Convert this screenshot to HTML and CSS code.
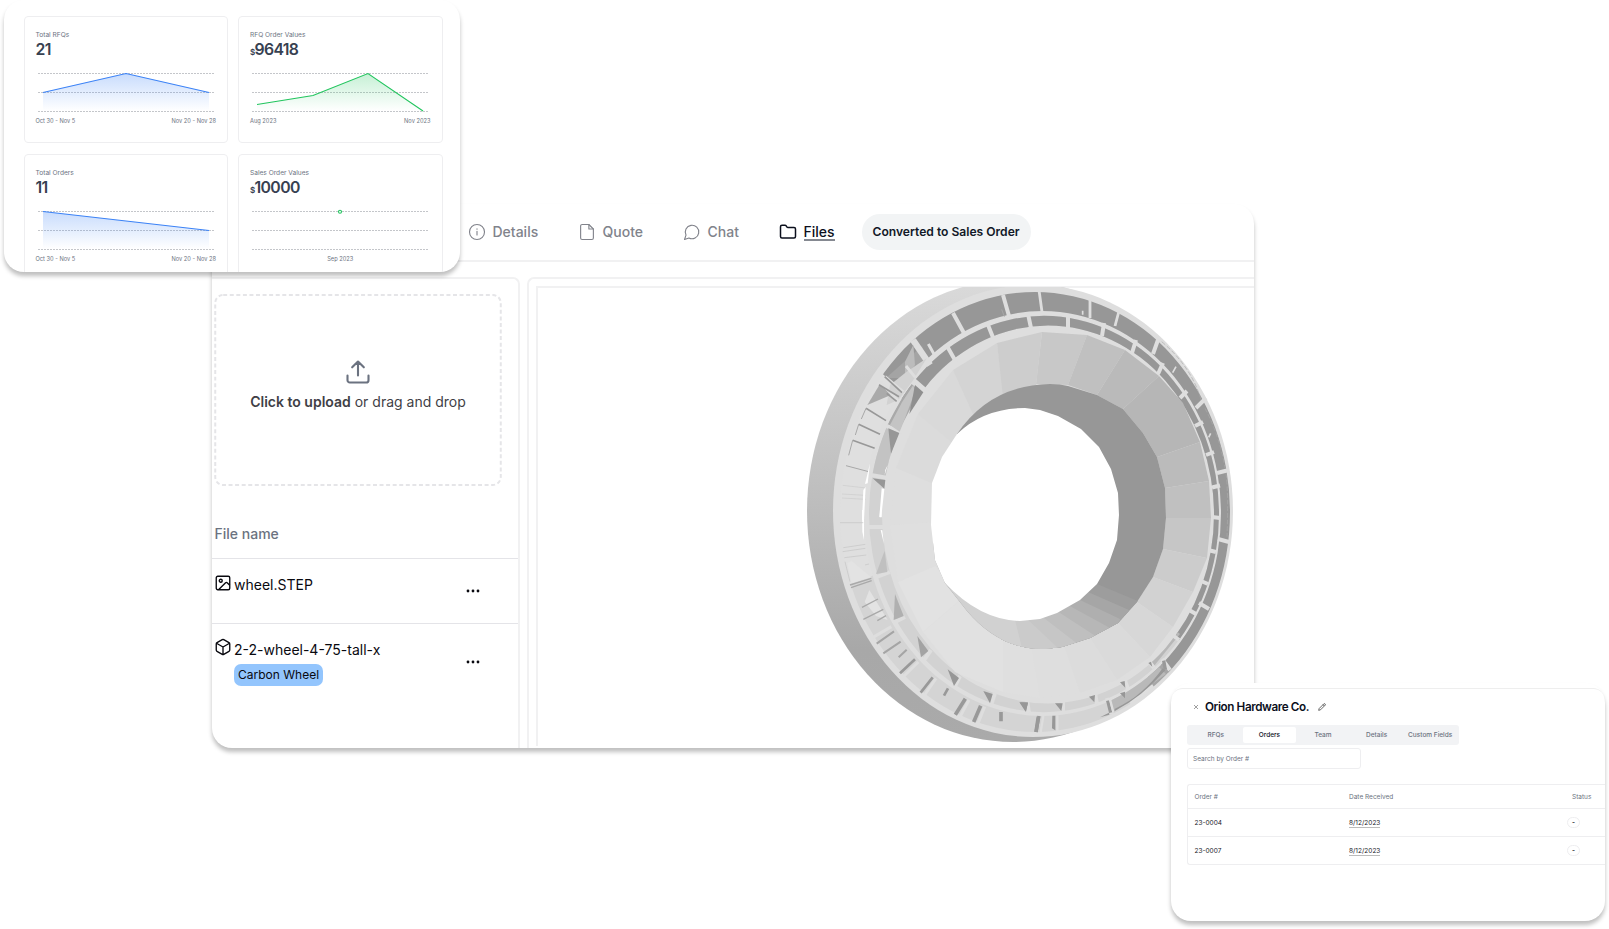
FILE: index.html
```html
<!DOCTYPE html>
<html lang="en">
<head>
<meta charset="utf-8">
<title>Orders workspace</title>
<link rel="stylesheet" href="styles.css">
</head>
<body>
<main class="canvas">

<section class="window files-window">
  <nav class="tabs">
    <a class="tab"><svg class="tab-icon" viewBox="0 0 24 24"><circle cx="12" cy="12" r="10"/><path d="M12 16v-5M12 7.6v.6"/></svg>Details</a>
    <a class="tab"><svg class="tab-icon" viewBox="0 0 24 24"><path d="M14.5 2H5.5a2 2 0 0 0-2 2v16a2 2 0 0 0 2 2h13a2 2 0 0 0 2-2V8z"/><path d="M14.5 2v6h6"/></svg>Quote</a>
    <a class="tab"><svg class="tab-icon" viewBox="0 0 24 24"><path d="M7.9 20A9 9 0 1 0 4 16.1L2 22Z"/></svg>Chat</a>
    <a class="tab tab-active"><svg class="tab-icon" viewBox="0 0 24 24"><path d="M20 20a2 2 0 0 0 2-2V8a2 2 0 0 0-2-2h-7.9a2 2 0 0 1-1.69-.9L9.6 3.9A2 2 0 0 0 7.93 3H4a2 2 0 0 0-2 2v13a2 2 0 0 0 2 2Z"/></svg><span class="tab-label">Files</span></a>
    <span class="status-pill">Converted to Sales Order</span>
  </nav>
  <div class="panels">
    <div class="file-panel">
      <div class="dropzone">
        <svg class="drop-outline" viewBox="0 0 289 193"><rect x="1" y="1" width="287" height="191" rx="8"/></svg>
        <svg class="upload-icon" viewBox="0 0 24 24"><path d="M21 15v4a2 2 0 0 1-2 2H5a2 2 0 0 1-2-2v-4M17 8l-5-5-5 5M12 3v12"/></svg>
        <p class="drop-text"><b>Click to upload</b> or drag and drop</p>
      </div>
      <div class="file-head">File name</div>
      <div class="file-row">
        <svg class="file-icon" viewBox="0 0 24 24"><rect x="3" y="3" width="18" height="18" rx="2"/><circle cx="9" cy="9" r="2"/><path d="m21 15-3.1-3.1a2 2 0 0 0-2.8 0L6 21"/></svg>
        <div class="file-info"><span class="file-name">wheel.STEP</span></div>
        <svg class="dots" viewBox="0 0 14 4"><circle cx="2" cy="2" r="1.4"/><circle cx="7" cy="2" r="1.4"/><circle cx="12" cy="2" r="1.4"/></svg>
      </div>
      <div class="file-row file-row-tall">
        <svg class="file-icon" viewBox="0 0 24 24"><path d="M21 8a2 2 0 0 0-1-1.73l-7-4a2 2 0 0 0-2 0l-7 4A2 2 0 0 0 3 8v8a2 2 0 0 0 1 1.73l7 4a2 2 0 0 0 2 0l7-4A2 2 0 0 0 21 16ZM3.3 7l8.7 5 8.7-5M12 22V12"/></svg>
        <div class="file-info"><span class="file-name">2-2-wheel-4-75-tall-x</span><span class="tag">Carbon Wheel</span></div>
        <svg class="dots" viewBox="0 0 14 4"><circle cx="2" cy="2" r="1.4"/><circle cx="7" cy="2" r="1.4"/><circle cx="12" cy="2" r="1.4"/></svg>
      </div>
    </div>
    <div class="viewer">
      <div class="viewport">
        <svg class="wheel" viewBox="538 287 716 461">
          <defs>
            <linearGradient id="body" x1="0" y1="0" x2="0" y2="1"><stop offset="0" stop-color="#dadada"/><stop offset=".5" stop-color="#bcbcbc"/><stop offset=".8" stop-color="#a8a8a8"/><stop offset="1" stop-color="#aaa"/></linearGradient>
            <clipPath id="outerRing"><path clip-rule="evenodd" d="M840 512a195 220 0 1 0 390 0a195 220 0 1 0-390 0M864 513.5a178.5 202.5 0 1 0 357 0a178.5 202.5 0 1 0-357 0"/></clipPath>
            <clipPath id="innerRing"><path clip-rule="evenodd" d="M869 514a175 198 0 1 0 350 0a175 198 0 1 0-350 0M882 514.5a166 189 0 1 0 332 0a166 189 0 1 0-332 0"/></clipPath>
          </defs>
          <ellipse cx="1013" cy="511" rx="206" ry="231" fill="url(#body)"/>
          <ellipse cx="1033" cy="511" rx="200" ry="226" fill="#dedede"/>
          <g clip-path="url(#outerRing)">
            <path fill="#dfdfdf" d="M830 280h410v460H830z"/>
            <path fill="#d4d4d4" d="M1040 513L835 590V745H1150z"/>
            <path fill="#979797" d="M1040 513L868 361V280H1240V720H1210L1160 664z"/>
            <path fill="#a6a6a6" d="M1040 513L1162 660l12 12-20 15z"/>
            <path fill="#b9b9b9" d="M1040 513L1152 660l14 14-52 38z"/>
            <path fill="#a4a4a4" d="M886 378l36-32 6 18-16 14z"/>
          </g>
          <g clip-path="url(#innerRing)">
            <path fill="#d2d2d2" d="M830 280h410v460H830z"/>
            <path fill="#979797" d="M1040 513L885 385V280H1240V640L1174 640z"/>
            <path fill="#a9a9a9" d="M1040 513L887 425l25-45z"/>
            <path fill="#c3c3c3" d="M1040 513L868 474l18-46z"/>
            <path fill="#b7b7b7" d="M1040 513L1180 634l-26 32z"/>
          </g>
          <g stroke="#dedede" stroke-width="4" fill="none">
            <path stroke-width="6.5" d="M913 340l17 25M912 380l15 13"/>
            <path d="M953 313l12 22M1003 295l6 21M1159 337l-6 17M1206 398l-10 10M1229 470l-12 3M1229 542l-11-3M1209 609l-10-6M1170 670l-8-11M1112 714l-5-16"/>
            <path stroke-width="2.8" d="M1039 290l3 22M1090 298v20M1119 311l-4 15"/>
            <path d="M947 346l9 16M988 325l6 15M1028 314l3 14M1068 314v14M1104 323l-2 13M1136 340l-4 13M1163 363l-5 11M1187 391l-7 7M1203 422l-8 4M1214 452l-8 3M1220 485.500l-8 2M1220 518l-8-1M1216 552l-8-2M1208 584l-7-3M1196 614l-7-4M1179 640l-8-6M1154 668l-6-8M1128 689l-4-11M1097 704l-2-11M1063 712v-11M1029 713l-2-13M991 705l4-12M954 688l6-12M924 660l7-10M893 623l12-6M874 578l16-6M868 527h17M871 475l17 3M887 426l15 6"/>
          </g>
          <!-- upper left pockets and ribs -->
          <g transform="translate(790 270) scale(.33333)">
            <path fill="#bcbcbc" d="M345 275l25-50 5 60-30 38z"/>
            <path fill="#d2d2d2" d="M300 345l50-40 60-40-40 65-45 60-35 15z"/>
            <path fill="#aaa" d="M268 345l40 28-76 32z"/><path fill="#c4c4c4" d="M300 465l36-68 34-52 5 20-34 90-12 30z"/>
            <path fill="#8f8f8f" d="M375 345l25 22-42 65z"/>
            <path fill="#979797" d="M295 475l33 14-25 62zM248 625l38 5-3 26z"/>
            <path stroke="#dedede" stroke-width="9" d="M415 222l18 32M348 288l28 34M285 320l55 46M270 335l55 58"/>
            <path stroke="#989898" stroke-width="5" fill="none" d="M284 320l52 48M267 344l60 36M290 370l30 24M228 415l60 37M206 463l64 30M188 511l66 24"/>
            <path stroke="#a8a8a8" stroke-width="3" fill="none" d="M168 587l68 18M228 415l-14 32M206 463l-10 32M188 511l-12 45M635 118l8 22"/>
            <path stroke="#ccc" stroke-width="2" fill="none" d="M158 646l70 8M156 672l70 4M156 684l70 4"/>
            <path fill="#fff" d="M240 580l-7 60-8 2zM227 650l-5 100h-6l4-90zM293 585l-9 30 2-16zM275 655l8 2-9 84h-6z"/>
          </g>
          <!-- lower left ribs -->
          <g transform="translate(790 510) scale(.33333)">
            <path fill="#fff" d="M216 0h6v90l-5-25zM270 0h5v22h-6zM272 60l5 1 5 42z"/>
            <path fill="#e3e3e3" d="M172 160l12-8 60 50-60 18zM238 240l55 90-35-12-34-42z"/>
            <path fill="#c0c0c0" d="M284 122l-26 70 34-6z"/>
            <path fill="#b0b0b0" d="M315 252l26 66-30 12z"/>
            <path fill="#a3a3a3" d="M382 378l33 45-22 19z"/>
            <path fill="#979797" d="M473 478l34 26-15 24zM580 543l28 9-8 28zM688 577l26 2-7 26z"/>
            <path stroke="#c4c4c4" stroke-width="2" fill="none" d="M150 38h70M160 113l66-10M158 125l68-10M163 143l66-8M225 165l12-3M165 155l15 60"/>
            <path stroke="#a9a9a9" stroke-width="4" fill="none" d="M180 225l64-20M183 233l62-21M216 292l48-25M220 328l60-30M262 332l26-15"/>
            <path stroke="#a5a5a5" stroke-width="6" fill="none" d="M260 401l52-37M280 430l52-35M326 442l24-23"/>
            <path stroke="#999" stroke-width="8" fill="none" d="M330 490l45-42M392 548l36-46M462 557l12-22"/>
            <path stroke="#999" stroke-width="11" fill="none" d="M496 614l30-48M551 636l21-49M633 634v-28M738 666l7-46"/>
            <path stroke="#dedede" stroke-width="9" fill="none" d="M244 385l60-35M340 500l45-44M404 555l34-50M510 620l27-50M564 640l20-50"/>
          </g>
          <!-- lower right ribs -->
          <g transform="translate(1020 510) scale(.33333)">
            <path fill="#979797" d="M0 577h24l-6 28zM105 580h23l-4 23zM207 560l18-5-2 22zM300 517l14-4 2 20zM385 459l8-4 4 15zM300 550l15-5v20zM97 617h9v44l-10-6z"/>
            <path stroke="#999" stroke-width="10" fill="none" d="M48 666l9-48M272 608l-9-36M436 478l-5-26"/>
            <path stroke="#dedede" stroke-width="7" fill="none" d="M62 666l8-48M112 664v-48M280 606l-10-38"/>
            <path fill="#979797" d="M284 603q80-40 152-122l-8-6Q370 556 284 597zM240 622l28-8-1-6z"/>
          </g>
          <g transform="translate(1020 270) scale(.33333)">
            <path stroke="#dedede" stroke-width="5" fill="none" d="M188 122v12M468 290l-10 18M572 490l-6 12"/>
            <path stroke="#ababab" stroke-width="2" stroke-dasharray="14 6" fill="none" d="M425 215q90 75 120 180M555 415q45 85 60 180M618 610q8 60 3 190"/>
          </g>
          <!-- cone facets -->
          <g>
            <path fill="#c8c8c8" d="M1042 332L1087 335 1068 385 1036 384z"/>
            <path fill="#c0c0c0" d="M1087 335L1125 350 1097 395 1068 385z"/>
            <path fill="#bababa" d="M1125 350L1159 376 1123 409 1097 395z"/>
            <path fill="#b6b6b6" d="M1159 376L1183 403 1200 442 1157 457 1143 433 1123 409z"/>
            <path fill="#bbb" d="M1200 442L1209 481 1165 488 1157 457z"/>
            <path fill="#c0c0c0" d="M1209 481L1211 518 1166 518 1165 488z"/>
            <path fill="#c6c6c6" d="M1211 518L1207 558 1163 549 1166 518z"/>
            <path fill="#ccc" d="M1207 558L1193 592 1153 577 1163 549z"/>
            <path fill="#d2d2d2" d="M1193 592L1173 627 1137 602 1153 577z"/>
            <path fill="#d7d7d7" d="M1173 627L1150 657 1118 623 1137 602z"/>
            <path fill="#dadada" d="M1150 657L1117 680 1090 638 1118 623z"/>
            <path fill="#dcdcdc" d="M1117 680L1080 693 1062 647 1090 638z"/>
            <path fill="#dedede" d="M1080 693L1040 698 1030 640 1062 640z"/>
            <path fill="#dfdfdf" d="M1040 698L1003 692 1003 635 1030 640z"/>
            <path fill="#e1e1e1" d="M1003 692L955 672 923 632 960 600 1003 635z"/>
            <path fill="#e2e2e2" d="M923 632L898 582 935 565 960 600z"/>
            <path fill="#dfdfdf" d="M898 582L890 525 932 522 938 565z"/>
            <path fill="#dedede" d="M890 525L896 468 936 480 936 522z"/>
            <path fill="#dbdbdb" d="M896 468L918 414 955 440 936 485z"/>
            <path fill="#d9d9d9" d="M918 414L953 370 978 410 955 445z"/>
            <path fill="#d4d4d4" d="M953 370L997 343 1004 396 973 414z"/>
            <path fill="#cdcdcd" d="M997 343L1042 332 1036 386 1003 397z"/>
          </g>
          <!-- bore and opening -->
          <clipPath id="boreClip"><path d="M1050 384Q1060 384 1068 386L1097 395 1123 409 1143 433 1157 457 1165 488 1166 518 1163 549 1153 577 1137 602 1118 623 1090 638 1062 647 1045 649Q1000 650 967 611L945 583 935 560 931 525 932 483 942 457 957 434Q990 385 1050 384z"/></clipPath>
          <g clip-path="url(#boreClip)">
            <path fill="#979797" d="M957 380h213v275H925V580l32-146z"/>
            <path fill="#9d9d9d" d="M1097 584L1145 604 1120 660H1000V560z"/>
            <path fill="#a6a6a6" d="M1088 592L1129 610 1120 660H1000V560z"/>
            <path fill="#afafaf" d="M1080 600L1120 619 1110 660H1000V560z"/>
            <path fill="#b7b7b7" d="M1068 605L1110 628 1100 660H1000V560z"/>
            <path fill="#bfbfbf" d="M1057 611L1097 637 1090 660H1000V560z"/>
            <path fill="#c6c6c6" d="M1040 615L1079 645 1070 660H1000V560z"/>
            <path fill="#cbcbcb" d="M1025 617L1060 650 1000 660V560z"/>
            <path fill="#d1d1d1" d="M925 560H1000L1025 660H925z"/>
            <path fill="#fff" d="M1025 408L1040 410 1058 416 1081 429 1099 447 1111 469 1118 493 1119 515 1117 540 1109 563 1097 584 1080 600 1057 613 1040 619 1020 621Q980 620 945 583L925 560V434H957Q984 408 1025 408z"/>
          </g>
        </svg>
      </div>
    </div>
  </div>
</section>

<section class="window stats-window">
  <article class="card">
    <h3 class="card-label">Total RFQs</h3><p class="card-value">21</p>
    <svg class="chart" viewBox="0 0 180 40"><defs><linearGradient id="blue" x1="0" y1="0" x2="0" y2="1"><stop offset="0" stop-color="#3b82f6" stop-opacity=".28"/><stop offset="1" stop-color="#3b82f6" stop-opacity="0"/></linearGradient></defs><path class="grid" d="M2 1.500h176M2 20.500h176M2 39.500h176"/><path fill="url(#blue)" d="M7 20.500L90 1.500 173 20.500V39H7z"/><path class="line blue" d="M7 20.500L90 1.500 173 20.500"/></svg>
    <div class="axis"><span>Oct 30 - Nov 5</span><span>Nov 20 - Nov 28</span></div>
  </article>
  <article class="card card-right">
    <h3 class="card-label">RFQ Order Values</h3><p class="card-value"><small>$</small>96418</p>
    <svg class="chart" viewBox="0 0 180 40"><defs><linearGradient id="green" x1="0" y1="0" x2="0" y2="1"><stop offset="0" stop-color="#22c55e" stop-opacity=".26"/><stop offset="1" stop-color="#22c55e" stop-opacity="0"/></linearGradient></defs><path class="grid" d="M2 1.500h176M2 20.500h176M2 39.500h176"/><path fill="url(#green)" d="M7 32.500L63 23.500 118 1.500 173 39H7z"/><path class="line green" d="M7 32.500L63 23.500 118 1.500 173 39"/></svg>
    <div class="axis"><span>Aug 2023</span><span>Nov 2023</span></div>
  </article>
  <article class="card">
    <h3 class="card-label">Total Orders</h3><p class="card-value">11</p>
    <svg class="chart" viewBox="0 0 180 40"><path class="grid" d="M2 1.500h176M2 20.500h176M2 39.500h176"/><path fill="url(#blue)" d="M7 1.500L173 20.500V39H7z"/><path class="line blue" d="M7 1.500L173 20.500"/></svg>
    <div class="axis"><span>Oct 30 - Nov 5</span><span>Nov 20 - Nov 28</span></div>
  </article>
  <article class="card card-right">
    <h3 class="card-label">Sales Order Values</h3><p class="card-value"><small>$</small>10000</p>
    <svg class="chart" viewBox="0 0 180 40"><path class="grid" d="M2 1.500h176M2 20.500h176M2 39.500h176"/><circle class="line green point" cx="90" cy="1.800" r="1.500"/></svg>
    <div class="axis axis-center"><span>Sep 2023</span></div>
  </article>
</section>

<section class="window order-window">
  <div class="order-body">
    <header class="order-head">
      <svg class="close" viewBox="0 0 6 6"><path d="M1 1l4 4M5 1L1 5"/></svg>
      <h2 class="order-title">Orion Hardware Co.</h2>
      <svg class="pencil" viewBox="0 0 24 24"><path d="M17 3a2.850 2.830 0 1 1 4 4L7.500 20.500 2 22l1.500-5.500ZM15 5l4 4"/></svg>
    </header>
    <nav class="segments"><span>RFQs</span><span class="segment-on">Orders</span><span>Team</span><span>Details</span><span>Custom Fields</span></nav>
    <div class="search">Search by Order #</div>
    <div class="table">
      <div class="tr th"><span>Order #</span><span>Date Received</span><span class="status-head">Status</span></div>
      <div class="tr"><span>23-0004</span><span><u>8/12/2023</u></span><span class="badge">-</span></div>
      <div class="tr tr-last"><span>23-0007</span><span><u>8/12/2023</u></span><span class="badge">-</span></div>
    </div>
  </div>
</section>

</main>
</body>
</html>
```
FILE: styles.css
```css
* { box-sizing: border-box; }
body { margin: 0; background: #fff; font-family: Inter, "Liberation Sans", sans-serif; }
h2, h3, p { margin: 0; }
svg { display: block; flex: none; }
.canvas { position: relative; width: 1609px; height: 929px; overflow: hidden; }
.window { position: absolute; overflow: hidden; background: #fff; border-radius: 20px; box-shadow: 0 4px 4px rgba(0, 0, 0, .25); }

/* files window */
.files-window { left: 212px; top: 204px; width: 1042px; height: 544px; }
.tabs { display: grid; grid-template-columns: 110px 105px 96px 83px auto; justify-content: start; align-items: center; height: 58px; padding: 0 0 1px 255.500px; border-bottom: 2px solid #f1f1f2; }
.tab { display: flex; align-items: center; gap: 7px; color: #81838b; font-size: 14px; font-weight: 500; }
.tab-icon { width: 18px; height: 18px; fill: none; stroke: currentColor; stroke-width: 1.500; stroke-linecap: round; stroke-linejoin: round; }
.tab-active { color: #0b0f1c; }
.tab-active .tab-icon { stroke-width: 2; }
.tab-label { line-height: 15px; border-bottom: 2px solid #858991; margin-top: 2px; }
.status-pill { display: flex; align-items: center; height: 36px; padding: 0 11px; border-radius: 18px; background: #f2f4f5; color: #111827; font-size: 12.100px; font-weight: 600; }
.panels { display: flex; gap: 7px; height: 486px; padding-top: 15px; }
.file-panel { width: 308px; flex: none; border: 2px solid #f1f1f2; border-left: 0; border-bottom: 0; border-radius: 0 7px 0 0; }
.dropzone { position: relative; display: flex; flex-direction: column; align-items: center; width: 288px; height: 193px; margin: 15px 0 0 2px; padding-top: 64px; }
.drop-outline { position: absolute; inset: 0; width: 288px; height: 192px; fill: none; stroke: #e5e5e8; stroke-width: 2; stroke-dasharray: 4 2.600; }
.upload-icon { width: 28px; height: 28px; fill: none; stroke: #6b7280; stroke-width: 1.800; stroke-linecap: round; stroke-linejoin: round; }
.drop-text { margin-top: 7px; color: #3f3f46; font-size: 14px; line-height: 18px; }
.drop-text b { font-weight: 600; }
.file-head { display: flex; align-items: center; height: 72px; padding: 22px 0 0 2.500px; border-bottom: 1px solid #e4e4e8; color: #6b7280; font-size: 14px; font-weight: 500; }
.file-row { position: relative; display: flex; height: 65px; padding: 15px 0 0 1.500px; border-bottom: 1px solid #e4e4e8; color: #09090f; }
.file-row-tall { height: auto; border: 0; padding-top: 14.500px; }
.file-icon { width: 18px; height: 18px; fill: none; stroke: #09090f; stroke-width: 1.800; stroke-linejoin: round; margin-top: -.5px; }
.file-info { display: flex; flex-direction: column; align-items: flex-start; width: 234px; padding-left: 2.500px; }
.file-name { font-size: 14px; line-height: 22px; }
.tag { height: 22px; margin-top: 3px; padding: 0 4px; border-radius: 7px; background: #93c5fd; font-size: 12px; line-height: 22px; }
.dots { width: 14px; height: 4px; margin-top: 15px; fill: #09090f; }
.file-row-tall .dots { margin-top: 21px; }
.viewer { flex: 1; padding: 7px 0 0 7px; border: 2px solid #f1f1f2; border-width: 2px 0 0 2px; border-radius: 7px 0 0 0; }
.viewport { height: 460px; border: 2px solid #f1f1f2; border-width: 2px 0 0 2px; }
.wheel { width: 716px; height: 461px; margin: -1px 0 0 -.5px; }

/* statistics window */
.stats-window { left: 4px; top: 0; width: 456px; height: 272px; display: grid; grid-template-columns: 204px 205px; grid-auto-rows: 127px; gap: 11px 10px; padding: 16px 0 0 20px; align-content: start; }
.card { padding: 14px 0 0 10.500px; border: 1px solid #eeeef0; border-radius: 4px; color: #374151; }
.card-right { padding-left: 11px; }
.card-label { color: #6b7280; font-size: 6.600px; font-weight: 400; line-height: 8px; }
.card-value { height: 20px; font-size: 15.800px; font-weight: 600; line-height: 22px; letter-spacing: -.650px; }
.card-value small { font-size: 8px; line-height: 1; }
.chart { width: 180px; height: 40px; margin-top: 13px; overflow: visible; }
.grid { fill: none; stroke: #b5b7bd; stroke-width: .800; stroke-dasharray: 2 1; }
.line { fill: none; stroke-width: 1.100; }
.blue { stroke: #3b82f6; }
.green { stroke: #22c55e; }
.point { fill: #fff; }
.axis { display: flex; justify-content: space-between; width: 180.500px; margin-top: 5px; color: #6b7280; font-size: 5.700px; line-height: 8px; }
.axis-center { justify-content: center; }

/* order window */
.order-window { left: 1171px; top: 683px; width: 434px; height: 237.500px; padding-top: 5px; }
.order-body { padding: 11px 0 0 16px; border-top: 1px solid #eee; border-radius: 12px 12px 0 0; }
.order-head { display: flex; align-items: center; height: 14px; padding-left: 6px; }
.close { width: 6px; height: 6px; fill: none; stroke: #777; stroke-width: .700; }
.order-title { margin-left: 6px; color: #0b0f1c; font-size: 11.700px; font-weight: 600; letter-spacing: -.400px; }
.pencil { width: 8px; height: 8px; margin-left: 9px; fill: none; stroke: #333; stroke-width: 2.200; }
.segments { display: grid; grid-template-columns: repeat(5, 1fr); width: 272px; height: 20px; margin-top: 11px; padding: 2px; border-radius: 3px; background: #f2f3f5; color: #6b7280; font-size: 6.500px; font-weight: 500; text-align: center; line-height: 16px; }
.segment-on { border-radius: 2px; background: #fff; color: #0b0f1c; }
.search { width: 174px; height: 21px; margin-top: 3px; padding-left: 5px; border: 1px solid #eeeef0; border-radius: 3px; color: #6b7280; font-size: 6.500px; line-height: 20px; }
.table { margin-top: 15px; border: 1px solid #eeeef0; border-right: 0; border-radius: 3px 0 0 3px; }
.tr { display: grid; grid-template-columns: 154.500px 218px auto; align-items: center; justify-content: start; height: 28px; padding-left: 6.500px; border-bottom: 1px solid #eeeef0; color: #18181f; font-size: 6.500px; }
.th { height: 24px; color: #6b7280; }
.tr-last { height: 27px; border: 0; }
.tr u { text-decoration: none; border-bottom: 1px solid #bbb; }
.status-head { padding-left: 5px; }
.badge { width: 13px; height: 11px; border: 1px solid #eeeef0; border-radius: 6px; font-weight: 600; line-height: 8.500px; text-align: center; }
```
